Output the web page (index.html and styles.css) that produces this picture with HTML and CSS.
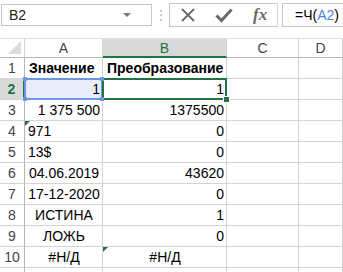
FILE: index.html
```html
<!DOCTYPE html>
<html lang="ru">

<head>
  <meta charset="UTF-8">
  <title>Книга1</title>
  <link rel="stylesheet" href="styles.css">
</head>

<body>
  <div class="formula-bar">
    <div class="name-box">
      <span>B2</span>
      <span class="drop"></span>
    </div>
    <div class="grip">&#8942;</div>
    <div class="fx-buttons">
      <svg class="icon" viewBox="0 0 16 16" width="16" height="16">
        <path d="M2 2 L14 14 M14 2 L2 14" stroke="#6a6a6a" stroke-width="1.8" fill="none" />
      </svg>
      <svg class="icon" viewBox="0 0 18 16" width="18" height="16">
        <path d="M1.5 8.5 L6.5 13.5 L16.5 2.5" stroke="#6a6a6a" stroke-width="3" fill="none" />
      </svg>
      <span class="fx">fx</span>
    </div>
    <div class="formula-input">=Ч(<span class="ref">A2</span>)</div>
  </div>

  <div class="sheet">
    <div class="corner"><span class="tri"></span></div>
    <div class="col-head">A</div>
    <div class="col-head active">B</div>
    <div class="col-head">C</div>
    <div class="col-head">D</div>

    <div class="row-head">1</div>
    <div class="cell bold">Значение</div>
    <div class="cell bold">Преобразование</div>
    <div class="cell"></div>
    <div class="cell"></div>

    <div class="row-head active">2</div>
    <div class="cell num ref-cell">1
      <span class="handle tl"></span><span class="handle tr"></span>
      <span class="handle bl"></span><span class="handle br"></span>
    </div>
    <div class="cell num selected">1</div>
    <div class="cell"></div>
    <div class="cell"></div>

    <div class="row-head">3</div>
    <div class="cell num">1 375 500</div>
    <div class="cell num">1375500</div>
    <div class="cell"></div>
    <div class="cell"></div>

    <div class="row-head">4</div>
    <div class="cell flag">971</div>
    <div class="cell num">0</div>
    <div class="cell"></div>
    <div class="cell"></div>

    <div class="row-head">5</div>
    <div class="cell">13$</div>
    <div class="cell num">0</div>
    <div class="cell"></div>
    <div class="cell"></div>

    <div class="row-head">6</div>
    <div class="cell mid">04.06.2019</div>
    <div class="cell num">43620</div>
    <div class="cell"></div>
    <div class="cell"></div>

    <div class="row-head">7</div>
    <div class="cell mid">17-12-2020</div>
    <div class="cell num">0</div>
    <div class="cell"></div>
    <div class="cell"></div>

    <div class="row-head">8</div>
    <div class="cell mid">ИСТИНА</div>
    <div class="cell num">1</div>
    <div class="cell"></div>
    <div class="cell"></div>

    <div class="row-head">9</div>
    <div class="cell mid">ЛОЖЬ</div>
    <div class="cell num">0</div>
    <div class="cell"></div>
    <div class="cell"></div>

    <div class="row-head">10</div>
    <div class="cell mid">#Н/Д</div>
    <div class="cell mid flag">#Н/Д</div>
    <div class="cell"></div>
    <div class="cell"></div>

    <div class="row-head"></div>
    <div class="cell"></div>
    <div class="cell"></div>
    <div class="cell"></div>
    <div class="cell"></div>
  </div>
</body>

</html>
```

FILE: styles.css
```css
body {
  margin: 0;
  padding: 0;
  background: #fff;
  font-family: "Liberation Sans", Arial, sans-serif;
  font-size: 14px;
  color: #000;
  overflow: hidden;
}

/* formula bar */
.formula-bar {
  display: flex;
  align-items: center;
  height: 24px;
  padding-top: 3px;
  margin-bottom: 11px;
}

.name-box {
  display: flex;
  align-items: center;
  justify-content: space-between;
  width: 151px;
  height: 22px;
  margin-left: 1px;
  padding: 0 0 0 7px;
  box-sizing: border-box;
  border: 1px solid #c6c6c6;
  color: #222;
}

.drop {
  width: 0;
  height: 0;
  margin-right: 20px;
  border-left: 4px solid transparent;
  border-right: 4px solid transparent;
  border-top: 4px solid #777;
}

.grip {
  width: 17px;
  text-align: center;
  color: #b0b0b0;
  font-size: 12px;
}

.fx-buttons {
  display: flex;
  align-items: center;
  justify-content: space-around;
  width: 109px;
  height: 24px;
  box-sizing: border-box;
  border: 1px solid #c6c6c6;
  border-right-color: #d8d8d8;
}

.fx {
  font-family: "Liberation Serif", serif;
  font-style: italic;
  font-weight: bold;
  font-size: 17px;
  color: #6a6a6a;
}

.formula-input {
  flex: 1;
  height: 24px;
  margin-left: 4px;
  padding-left: 12px;
  box-sizing: border-box;
  border: 1px solid #c6c6c6;
  border-right: none;
  line-height: 22px;
}

.ref {
  color: #4f84d8;
}

/* grid */
.sheet {
  display: grid;
  grid-template-columns: 25px 78px 124px 72px 1fr;
  grid-template-rows: 20px repeat(11, 21px);
}

.corner {
  position: relative;
  border-right: 1px solid #d4d4d4;
  border-bottom: 1px solid #b6b6b6;
  border-top: 1px solid #e0e0e0;
}

.tri {
  position: absolute;
  right: 3px;
  bottom: 3px;
  border-left: 13px solid transparent;
  border-bottom: 13px solid #dcdcdc;
}

.col-head {
  display: flex;
  align-items: center;
  justify-content: center;
  border-top: 1px solid #e0e0e0;
  border-right: 1px solid #d4d4d4;
  border-bottom: 1px solid #b6b6b6;
  color: #444;
  font-size: 14px;
}

.col-head.active {
  background: #d9d9d9;
  border-bottom: 2px solid #217346;
  color: #217346;
}

.row-head {
  display: flex;
  align-items: center;
  justify-content: center;
  border-right: 1px solid #b6b6b6;
  border-bottom: 1px solid #d4d4d4;
  color: #444;
}

.row-head.active {
  background: #d9d9d9;
  border-right: 2px solid #217346;
  color: #217346;
  font-weight: bold;
}

.cell {
  position: relative;
  display: flex;
  align-items: center;
  padding: 0 2px 0 3px;
  border-right: 1px solid #d4d4d4;
  border-bottom: 1px solid #d4d4d4;
  white-space: nowrap;
}

.cell.bold {
  font-weight: bold;
  padding-left: 4px;
}

.cell.num {
  justify-content: flex-end;
}

.cell.mid {
  justify-content: center;
}

.flag::before {
  content: "";
  position: absolute;
  left: 0;
  top: 0;
  border-top: 5px solid #217346;
  border-right: 5px solid transparent;
}

.ref-cell {
  background: #e8edfb;
}

.ref-cell::after {
  content: "";
  position: absolute;
  left: -1px;
  top: -1px;
  right: -1px;
  bottom: -1px;
  border: 2px solid #6d96e2;
}

.handle {
  position: absolute;
  width: 4px;
  height: 4px;
  background: #6d96e2;
  z-index: 2;
}

.handle.tl { left: -2px; top: -2px; }
.handle.tr { right: -2px; top: -2px; }
.handle.bl { left: -2px; bottom: -2px; }
.handle.br { right: -2px; bottom: -2px; }

.selected::after {
  content: "";
  position: absolute;
  left: -1px;
  top: -1px;
  right: -1px;
  bottom: -1px;
  border: 2px solid #217346;
}

.selected::before {
  content: "";
  position: absolute;
  right: -4px;
  bottom: -4px;
  width: 5px;
  height: 5px;
  background: #217346;
  border: 1px solid #fff;
  z-index: 2;
}
```
